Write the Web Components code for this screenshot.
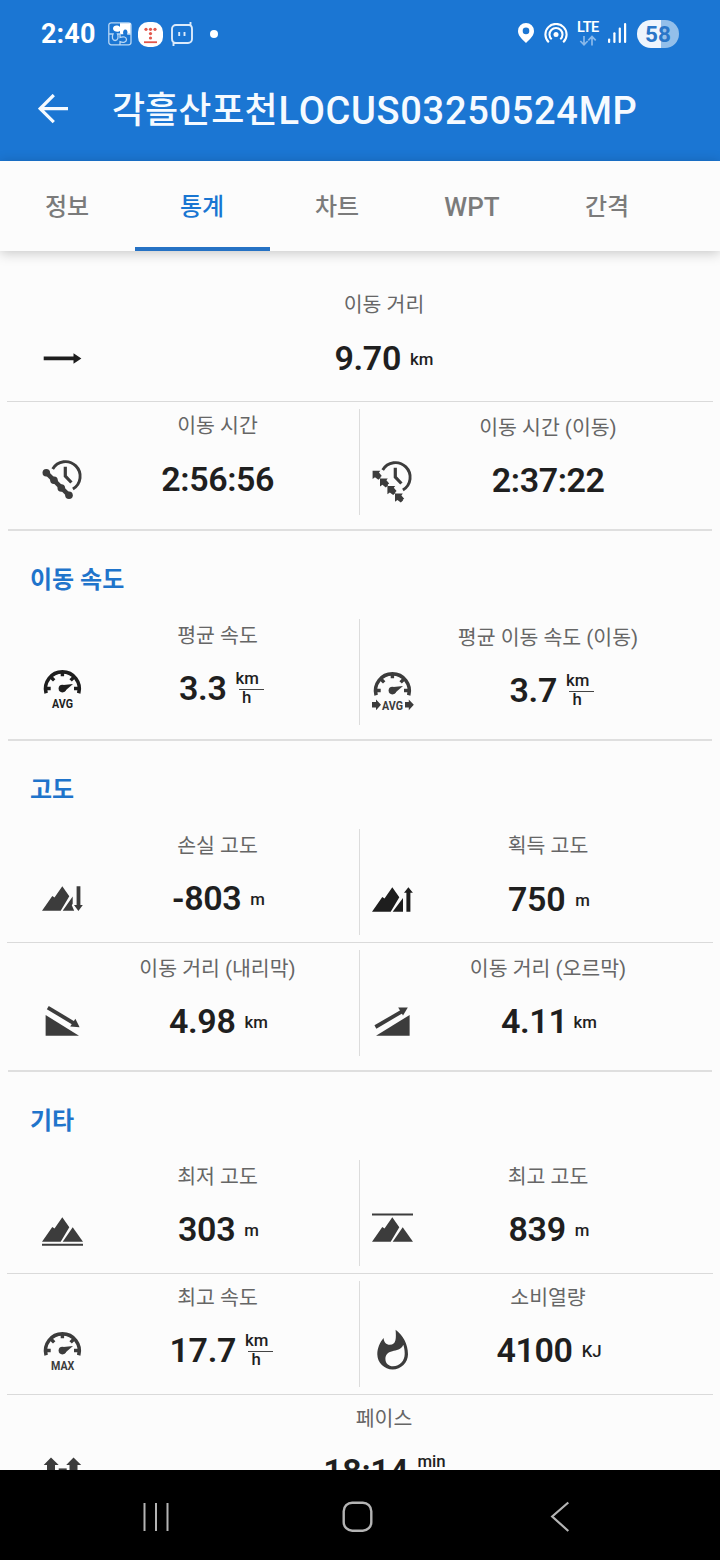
<!DOCTYPE html>
<html lang="ko">
<head>
<meta charset="utf-8">
<title>LOCUS</title>
<style>
html,body{margin:0;padding:0;background:#fcfcfc}
body{width:720px;height:1560px;overflow:hidden;font-family:Roboto,"Noto Sans CJK KR",sans-serif}
</style>
</head>
<body>
<track-screen></track-screen>
<script>
const define = (name, html, setup) => {
  const template = document.createElement('template');
  template.innerHTML = html;
  customElements.define(name, class extends HTMLElement {
    connectedCallback() {
      if (this.shadowRoot) return;
      const root = this.attachShadow({ mode: 'open' });
      root.append(template.content.cloneNode(true));
      if (setup) setup(this, root);
    }
  });
};

const gauge = `<path d="M6.1 26.2A16.9 16.9 0 1 1 38.7 26.2" fill="none" stroke="currentColor" stroke-width="3.6"/>
<path d="M6 21.5h4.7M34 21.5h4.7M22.4 5v4.2M11 10.2l3.2 3.2M33.8 10.2l-3.2 3.2" stroke="currentColor" stroke-width="3.4"/>
<circle cx="22.4" cy="21.6" r="3.8"/><path d="M21.2 18.2L33 17.1 24.3 24.6z"/>`;
const peak = `<path d="M2 33.7L12.3 19l2.2 1.6 7.8-11.3 7 9.9-8.6 14.5z"/>`;
const clock = `<path d="M12.7 11A14.7 14.7 0 1 1 32.9 31" fill="none" stroke="currentColor" stroke-width="2.9"/>
<path d="M25.3 8.7v9.3l6.1 6.5" fill="none" stroke="currentColor" stroke-width="3.2"/>`;
const chip = (x, y) => `<path transform="translate(${x} ${y})" d="M-4.2-4.2H3.6L2.200-2.400 5 .9 3.600 2 3.800 2.800 1.600 4.800-1.800 2.200-4.200 4z"/>`;
const icons = {
  arrow: `<path d="M3.7 19.6H33.5V16.2L41.4 21.4 33.5 26.8V23.2H3.7z"/>`,
  time: clock + `<path d="M6.3 14.7L29 37.3" stroke="currentColor" stroke-width="4.6"/><circle cx="6.3" cy="14.7" r="3.8"/><circle cx="14" cy="22.3" r="3.8"/><circle cx="21.3" cy="30" r="3.8"/><circle cx="29" cy="37.3" r="3.8"/>`,
  timemove: clock + chip(6.8, 16) + chip(14.2, 23.6) + chip(21.6, 31.2) + chip(29.2, 38.8),
  avg: gauge + `<text x="12" y="41" textLength="21" lengthAdjust="spacingAndGlyphs">AVG</text>`,
  avgmove: gauge + `<text x="12" y="41" textLength="21" lengthAdjust="spacingAndGlyphs">AVG</text><path d="M2 33H6V30.4L11 35.8 6 41.2V38.6H2zM35 33h3.8v-2.6l5 5.4-5 5.4v-2.6H35z"/>`,
  max: gauge + `<text x="11" y="41" textLength="23.400" lengthAdjust="spacingAndGlyphs">MAX</text>`,
  loss: peak + `<path d="M22.7 33.7L32.7 19.6V26.8L31.8 28.3 34.2 33.7z"/><path d="M36.6 9.3h3.8V28h2.4l-4.4 6-4.4-6h2.6z"/>`,
  gain: peak + `<path d="M22.7 33.7L33 20V33.7z"/><path d="M36.4 33.7V14.7H34l4.4-5.5 4.5 5.5h-2.5v19z"/>`,
  down: `<path d="M5.6 15V35.7H39z"/><path d="M7.8 7.6L34 23.3" stroke="currentColor" stroke-width="3.8"/><path d="M35.4 18.800L39.600 27.300 30.2 26.6z"/>`,
  up: `<path d="M39.6 15V35.7H6z"/><path d="M5.4 27L33 10.8" stroke="currentColor" stroke-width="3.8"/><path d="M28.2 7.5h9.6L33 15.6z"/>`,
  low: peak + `<path d="M22.7 33.7L32.7 19.3 43 33.7z"/><path d="M2 35.8h41v2H2z"/>`,
  high: peak + `<path d="M22.7 33.7L32.7 19.3 43 33.7z"/><path d="M2 5.4h41v2.2H2z"/>`,
  fire: `<path fill-rule="evenodd" d="M25.600.7C33 6.200 38 15 38 25.200 38 33.600 31.100 40.400 22.700 40.400S7.300 33.600 7.300 25.200C7.300 19.400 9.800 13.500 13.600 9 13.800 13.200 16.200 15.800 19.800 15.800 26.500 15.800 26.200 8.500 25.600.7zM33.300 15.800C31.300 21 26.300 21.300 22.300 22.200 17.700 23.200 15.400 26 15.400 30 15.400 34.300 18.600 37.300 23 37.300 30 37.300 34.800 31.500 34.700 24.800 34.700 21.800 34.300 18.700 33.300 15.800z"/>`,
  pace: `<path d="M11 7.6L18.7 15H15V30H7V15H3.7zM33.5 7.6L41.2 15H37.5V30H29.5V15H26.2z"/><path d="M18.7 18.4h8v4h-8z"/>`
};

define('stat-icon', `<style>
:host{display:block;width:44px;height:44px;color:#3c3c3c}
:host([dark]){color:#1e1e1e}
svg{display:block;overflow:visible}
text{font:700 13.6px Roboto,sans-serif}
</style><svg width="44" height="44" viewBox="0 0 44 44" fill="currentColor"></svg>`, (el, root) => {
  root.querySelector('svg').innerHTML = icons[el.getAttribute('name')];
});

/* One figure: icon, caption, number and unit. A unit such as "km/h" is drawn as a fraction. */
define('stat-cell', `<style>
:host{display:grid;grid-template-columns:64px 1fr;height:106px;box-sizing:border-box;padding:0 18px 0 30px;flex:0 0 359px}
:host([side=right]){padding:0 48px 0 0;border-left:1px solid #dcdcdc;flex:0 0 361px}
:host([side=right]) .icon{margin-left:-1px}
:host([side=full]){padding-right:46px;flex:1}
.icon{display:flex;justify-content:center;padding-top:calc(48px + var(--dv,0px))}
.body{display:flex;flex-direction:column;align-items:center;white-space:nowrap}
.label{height:30px;line-height:30px;margin-top:calc(2px + var(--dl,0px));font-size:20.5px;color:#666;font-weight:400}
.value{height:40px;margin-top:calc(17px + var(--dv,0px) - var(--dl,0px));display:flex;align-items:center;gap:var(--gap,9.5px);color:#1f1f1f;font-weight:650}
.value.u{padding-left:2px}
.num{font-size:34px;line-height:40px;letter-spacing:-.4px;margin-right:-.4px}
.unit{font-size:16.8px;line-height:20px;font-weight:500;padding-top:1px}
.frac{display:grid;grid-template-rows:19px 19px;margin:-1px -6px 0 0;padding-top:0}
.frac span{line-height:19px}
.frac .n{padding-right:5px}
.frac .d{padding-left:6.5px;background:linear-gradient(#444,#444) 3px 1px/26px 1px no-repeat}
</style>
<div class="icon"></div>
<div class="body"><div class="label"><slot></slot></div><div class="value"><span class="num"></span></div></div>`, (el, root) => {
  const icon = document.createElement('stat-icon');
  icon.setAttribute('name', el.getAttribute('icon'));
  if (el.hasAttribute('dark')) icon.setAttribute('dark', '');
  root.querySelector('.icon').append(icon);
  root.querySelector('.num').textContent = el.getAttribute('value');
  const unit = el.getAttribute('unit');
  if (!unit) return;
  const box = document.createElement('span');
  const [top, bottom] = unit.split('/');
  if (bottom) {
    box.className = 'unit frac';
    box.innerHTML = `<span class="n">${top}</span><span class="d">${bottom}</span>`;
  } else {
    box.className = 'unit';
    box.textContent = unit;
  }
  const value = root.querySelector('.value');
  value.append(box);
  if (el.getAttribute('side') !== 'full') value.classList.add('u');
});

define('stat-row', `<style>
:host{display:block}
.cells{display:flex;padding:7px 0}
.line{height:1px;margin:0 7px;background:#dadada}
:host([last]) .cells{padding-bottom:14px}
:host([last]) .line{height:2px;margin:0 8px;background:#dfdfdf}
</style><div class="cells"><slot></slot></div><div class="line"></div>`);

define('section-title', `<style>
:host{display:block;height:81px;box-sizing:border-box;padding:29px 0 0 30px;line-height:40px;font-size:24px;font-weight:700;color:#1f74cb}
</style><slot></slot>`);

define('status-bar', `<style>
:host{display:flex;align-items:center;height:68px;color:#fff;padding:0 41px}
.time{font:700 27px/30px Roboto,sans-serif;width:67px;letter-spacing:.1px}
.gap{flex:1}
svg{display:block;flex:none}
.lte{width:23px;height:24px;margin:0 8px 0 9px;font:600 14.500px/12px Roboto,sans-serif}
.lte span{display:block;letter-spacing:-.5px}
.lte svg{margin-top:1px}
.bat{width:42px;height:28px;border-radius:14px;background:linear-gradient(90deg,#eef5fd 24px,#93bfea 24px);color:#2a76c8;font:700 22.5px/28px Roboto,sans-serif;text-align:center;margin:-1px 0 0 10px}
</style>
<span class="time">2:40</span>
<svg width="24" height="24" viewBox="0 0 24 24" fill="none" stroke="#b8d7f5" stroke-width="1.300"><rect x=".8" y=".8" width="22.200" height="22" rx="2.500"/><path d="M12 1.300h10.500v11h-3.200c.7-3-.4-4.800-2-4.800s-2.700 1.800-2 4.800H12V9C10.500 10.500 5 10 5 6.500S10 2.800 12 5z" fill="#fff" stroke="none"/><path d="M1 12h4c-1.600 3.500-.4 6.500 2.100 6.500s4-3 2.400-6.500H12v3.500c3.500-1.500 6.500-.5 6.500 2s-3 3.700-6.500 2.200V23M19.300 12H23"/></svg>
<svg style="margin-left:6px" width="25" height="25" viewBox="0 0 25 25"><rect width="25" height="25" rx="10" fill="#fff"/><g fill="#e2574c"><circle cx="8" cy="7.300" r="1.600"/><circle cx="12.500" cy="7.300" r="1.600"/><circle cx="17" cy="7.300" r="1.600"/><circle cx="12.500" cy="11.600" r="1.600"/><circle cx="12.500" cy="16" r="1.600"/><rect x="6" y="19.300" width="13" height="1.800"/></g></svg>
<svg style="margin:-1px 0 0 7px" width="24" height="26" viewBox="0 0 24 26" fill="none" stroke="#dcebfb" stroke-width="1.900"><path d="M20.500 1v3H6a4 4 0 0 0-4 4v9.500M3.500 25v-3H18a4 4 0 0 0 4-4V8M2 17.500q0 4.500 4 4.500M22 8q0-4-3-4M9.200 11v4M14.500 11v4"/></svg>
<svg style="margin-left:16px" width="8" height="8"><circle cx="4" cy="4" r="4" fill="#fff"/></svg>
<span class="gap"></span>
<svg width="16" height="20" viewBox="0 0 16 20" style="margin-top:-2px"><path fill="#fff" fill-rule="evenodd" d="M8 0a8 8 0 0 1 8 8c0 4.500-3 7-8 12C3 15 0 12.500 0 8a8 8 0 0 1 8-8zm0 4.600a3.300 3.300 0 1 0 0 6.600 3.300 3.300 0 0 0 0-6.600z"/></svg>
<svg style="margin:-2px 0 0 10px" width="24" height="20" viewBox="0 0 24 20" fill="none" stroke="#fff" stroke-width="2.100"><path d="M4.800 19.300A10.600 10.600 0 1 1 19.200 19.300M7.700 16.300A6.500 6.500 0 1 1 16.300 16.300"/><circle cx="12" cy="11.600" r="2.500" fill="#fff" stroke="none"/></svg>
<span class="lte"><span>LTE</span><svg width="22" height="12" viewBox="0 0 22 12" fill="none" stroke="#8ab9ea" stroke-width="1.700"><path d="M7 1v8.500M3.300 6L7 9.800 10.700 6M15 10.500V2M11.300 5.300L15 1.500l3.700 3.800"/></svg></span>
<svg width="19" height="20" viewBox="0 0 19 20" fill="#fff" style="margin-top:-2px"><rect x="0" y="15.500" width="2.200" height="4.500" rx="1"/><rect x="5.300" y="9.300" width="2.200" height="10.700" rx="1"/><rect x="10.700" y="4.500" width="2.200" height="15.500" rx="1"/><rect x="16" y="0" width="2.200" height="20" rx="1"/></svg>
<span class="bat">58</span>`);

define('app-bar', `<style>
:host{display:flex;align-items:center;height:93px;box-sizing:border-box;padding:0 0 10px 38px;color:#f5faff}
svg{margin-top:-1px}
.t{margin:2px 0 0 44px;font-size:36px;line-height:54px;font-weight:500;white-space:nowrap;display:flex}
.l{letter-spacing:.7px;font-size:38px;margin-left:1px}
</style>
<svg width="30" height="30" viewBox="0 0 30 30" fill="none" stroke="currentColor" stroke-width="3.200"><path d="M30 14.600H2.500M15.800 1L2.200 14.600 15.800 28.200"/></svg>
<span class="t"><span>각흘산포천</span><span class="l">LOCUS03250524MP</span></span>`);

define('tab-item', `<style>
:host{display:block;width:135px;height:90px;box-sizing:border-box;padding-right:1px;line-height:92px;text-align:center;font-size:24px;font-weight:500;color:#7b7b7b}
:host([active]){color:#1976d2;border-bottom:4px solid #2672c4}
:host([latin]){font-size:26px;letter-spacing:.1px}
</style><slot></slot>`);

define('tab-bar', `<style>
:host{display:flex;height:90px;background:#fcfcfc;box-shadow:0 2px 12px rgba(0,0,0,.22);position:relative;z-index:1}
</style><slot></slot>`);

define('nav-bar', `<style>
:host{display:grid;grid-template-columns:312px 91px 313px;height:90px;background:#000;flex:none}
div{display:flex;align-items:center;justify-content:center;padding-top:3px}
svg{display:block}
</style>
<div><svg width="26" height="30" viewBox="0 0 26 30" stroke="#b4b4b4" stroke-width="2"><path d="M1.500 1v28M13 1v28M24.500 1v28"/></svg></div>
<div><svg width="31" height="32" viewBox="0 0 31 32" fill="none" stroke="#b4b4b4" stroke-width="2.400"><rect x="1.700" y="1.700" width="27.600" height="28" rx="8.500"/></svg></div>
<div><svg width="20" height="32" viewBox="0 0 20 32" fill="none" stroke="#b4b4b4" stroke-width="2.200"><path d="M18.300 1.500L2.200 15.500l16.100 14.500"/></svg></div>`);

define('track-screen', `<style>
:host{display:flex;flex-direction:column;width:720px;height:1560px}
header{background:#1b76d3;height:161px;flex:none}
main{flex:1;overflow:hidden;min-height:0;padding-top:30px}
</style>
<header><status-bar></status-bar><app-bar></app-bar></header>
<tab-bar><tab-item>정보</tab-item><tab-item active>통계</tab-item><tab-item>차트</tab-item><tab-item latin>WPT</tab-item><tab-item>간격</tab-item></tab-bar>
<main>
<stat-row><stat-cell side="full" icon="arrow" dark value="9.70" unit="km" style="--dv:1px">이동 거리</stat-cell></stat-row>
<stat-row last><stat-cell icon="time" value="2:56:56" style="--dv:1px">이동 시간</stat-cell><stat-cell side="right" icon="timemove" value="2:37:22" style="--dv:2px;--dl:2px">이동 시간 (이동)</stat-cell></stat-row>
<section-title>이동 속도</section-title>
<stat-row last><stat-cell icon="avg" dark value="3.3" unit="km/h">평균 속도</stat-cell><stat-cell side="right" icon="avgmove" value="3.7" unit="km/h" style="--dv:2px;--dl:2px">평균 이동 속도 (이동)</stat-cell></stat-row>
<section-title>고도</section-title>
<stat-row><stat-cell icon="loss" value="-803" unit="m">손실 고도</stat-cell><stat-cell side="right" icon="gain" dark value="750" unit="m" style="--dv:1px;--gap:10.5px">획득 고도</stat-cell></stat-row>
<stat-row last><stat-cell icon="down" value="4.98" unit="km" style="--dv:2px;--dl:2px">이동 거리 (내리막)</stat-cell><stat-cell side="right" icon="up" value="4.11" unit="km" style="--dv:2px;--dl:2px;--gap:6.5px">이동 거리 (오르막)</stat-cell></stat-row>
<section-title>기타</section-title>
<stat-row><stat-cell icon="low" value="303" unit="m">최저 고도</stat-cell><stat-cell side="right" icon="high" value="839" unit="m">최고 고도</stat-cell></stat-row>
<stat-row><stat-cell icon="max" value="17.7" unit="km/h">최고 속도</stat-cell><stat-cell side="right" icon="fire" value="4100" unit="KJ">소비열량</stat-cell></stat-row>
<stat-row><stat-cell side="full" icon="pace" value="18:14" unit="min/km">페이스</stat-cell></stat-row>
</main>
<nav-bar></nav-bar>`);
</script>
</body>
</html>
